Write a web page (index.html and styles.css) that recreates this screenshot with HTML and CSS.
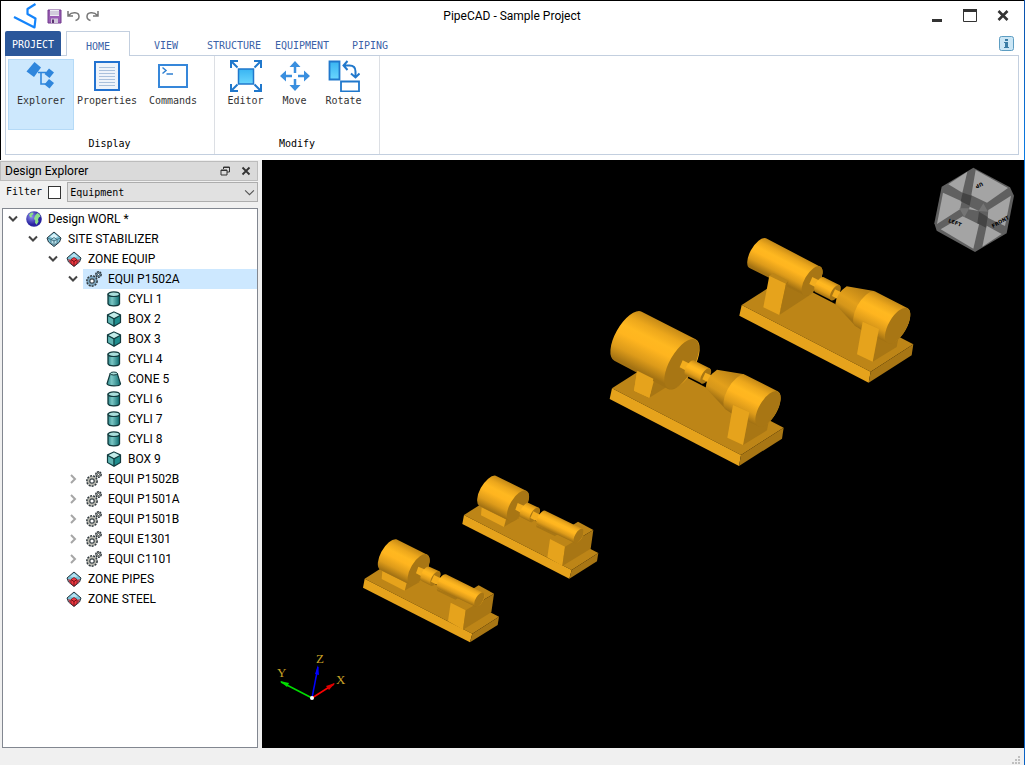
FILE: index.html
```html
<!DOCTYPE html>
<html lang="en">
<head>
<meta charset="utf-8">
<title>PipeCAD - Sample Project</title>
<link rel="stylesheet" href="styles.css">
</head>
<body>
<svg class="defs" aria-hidden="true">
  <defs>
    <linearGradient id="teal"><stop offset="0" stop-color="#2d8a8c"/><stop offset=".35" stop-color="#7cc6c4"/><stop offset="1" stop-color="#0f6f73"/></linearGradient>
    <linearGradient id="sky" x2="0" y2="1"><stop offset="0" stop-color="#39b4f2"/><stop offset="1" stop-color="#6ad6fd"/></linearGradient>
    <radialGradient id="globe" cx=".35" cy=".35"><stop offset="0" stop-color="#8f90f0"/><stop offset="1" stop-color="#2a24a0"/></radialGradient>
    <symbol id="i-world" viewBox="0 0 16 16"><circle cx="8" cy="8" r="7.800" fill="url(#globe)"/><path d="M3 3.500 5.500 1.500l2 .3-.5 1.700-1.500 1 .5 1.500-1.500.5-1-1.500zM9.500 4l2-2 2 1.200 1 2.500-1.500.5-1 2 .5 2.500-2 3-1.500-2 .2-2.500L8 8l.5-2z" fill="#8be08a"/></symbol>
    <symbol id="i-site" viewBox="0 0 16 16"><path d="M8 1l7 6-1.500 4L8 15.500 2.500 11 1 7z" fill="#7cc4da" stroke="#22333c"/><path d="M4 5.500 8 2.500l4 3L8 8z" fill="#d9f2f8"/><path d="M5 8.500 8 6.500l3 2v3L8 14.500l-3-3zM8 9.500V14M5 8.500l3 1.500 3-1.500M1.500 7 5 8.500M14.500 7 11 8.500" fill="#b9e2ec" stroke="#38606e" stroke-width=".8"/></symbol>
    <symbol id="i-zone" viewBox="0 0 16 16"><path d="M8 1l7 6-1.500 4L8 15.500 2.500 11 1 7z" fill="#7cc4da" stroke="#22333c"/><path d="M4 5.500 8 2.500l4 3L8 6z" fill="#b8e4f2"/><path d="M2 8l3 1v3.500l-2-1.500zM14 8l-3 1v3.500l2-1.500z" fill="#b9404c"/><path d="M5 8.500 8 6.500l3 2v4L8 15l-3-2.500z" fill="#ee3a42" stroke="#8d161d" stroke-width=".8"/><path d="M8 10v5M5 8.500 8 10.500l3-2" fill="none" stroke="#7b1016"/></symbol>
    <symbol id="i-gears" viewBox="0 0 16 16"><circle cx="6" cy="10" r="5" fill="var(--gear)" stroke="#333c42" stroke-width="1.800" stroke-dasharray="2 1"/><circle cx="6" cy="10" r="4.400" fill="var(--gear)"/><circle cx="6" cy="10" r="2.200" fill="#fff" stroke="#3e474d" stroke-width="1.200"/><circle cx="12.500" cy="3.500" r="2.700" fill="var(--gear)" stroke="#333c42" stroke-width="1.500" stroke-dasharray="2 .7"/><circle cx="12.500" cy="3.500" r="1" fill="#fff" stroke="#333c42" stroke-width=".8"/></symbol>
    <symbol id="i-cyl" viewBox="0 0 16 16"><path d="M3 3.500v9.500c1.500 2.300 8.500 2.300 10 0V3.500z" fill="#999" opacity=".4" transform="translate(1 1)"/><path d="M2 3.200v9.600c1 2.800 10.500 2.800 11.500 0V3.200z" fill="url(#teal)" stroke="#123a3d" stroke-width="1.300"/><ellipse cx="7.800" cy="3.200" rx="5.700" ry="2.300" fill="#a9dedb" stroke="#123a3d" stroke-width="1.200"/></symbol>
    <symbol id="i-box" viewBox="0 0 16 16"><path d="M8 1l6.500 3v7.500L8 15.200 1.500 11.500V4z" fill="#1f8d8d" stroke="#123a3d" stroke-width="1.200"/><path d="M8 1.500l6 2.900L8 7.500 2 4.400z" fill="#c3ebe8"/><path d="M2.200 5.200 7.500 8v6L2.200 11.200z" fill="#62b5b3"/><path d="M1.500 4.300 8 7.700l6.500-3.400M8 7.700V15" fill="none" stroke="#123a3d" stroke-width="1.200"/></symbol>
    <symbol id="i-cone" viewBox="0 0 16 16"><path d="M4.200 2.500 1 12.800c1 2.700 13 2.700 13.500 0L11.300 2.500z" fill="url(#teal)" stroke="#123a3d" stroke-width="1.200"/><ellipse cx="7.800" cy="2.500" rx="3.500" ry="1.500" fill="#a9dedb" stroke="#123a3d"/></symbol>
    <symbol id="i-down" viewBox="0 0 10 10"><path d="M1 2.500 5 6.500 9 2.500" fill="none" stroke="#444" stroke-width="2"/></symbol>
    <symbol id="i-right" viewBox="0 0 10 10"><path d="M3 1 7 5 3 9" fill="none" stroke="#a6a6a6" stroke-width="2"/></symbol>
  </defs>
</svg>

<div class="window">
  <header class="head">
    <div class="titlebar">
      <svg class="logo" viewBox="0 0 26 27" aria-hidden="true"><path d="M22.500 2 14.500 7v5L22.500 16.500 21.500 25.500 1 15" fill="none" stroke="#1484fb" stroke-width="2.200" stroke-linejoin="round"/></svg>
      <div class="quick">
        <button class="qbtn" aria-label="Save"><svg viewBox="0 0 15 15"><path d="M1 1h13v13H1z" fill="#9a5cb4" stroke="#713a8c"/><path d="M3 1h9v6H3z" fill="#ececf2"/><path d="M3 3h9M3 5h9" stroke="#b5a9c4"/><path d="M4 9.500h7V14H4z" fill="#cfc6da"/><path d="M5 10.500h2V14H5z" fill="#5c3473"/></svg></button>
        <button class="qbtn" aria-label="Undo"><svg viewBox="0 0 15 15"><path d="M2 2v5h5M2.500 6.500C6 2.500 13 3 13 7.500c0 2-1.300 3.500-3.500 4" fill="none" stroke="#777" stroke-width="1.500"/></svg></button>
        <button class="qbtn" aria-label="Redo"><svg viewBox="0 0 15 15"><path d="M13 2v5H8M12.500 6.500C9 2.500 2 3 2 7.500c0 2 1.300 3.500 3.500 4" fill="none" stroke="#777" stroke-width="1.500"/></svg></button>
      </div>
      <h1 class="title">PipeCAD - Sample Project</h1>
      <div class="winctl">
        <button class="wbtn" aria-label="Minimize"><svg viewBox="0 0 14 14"><path d="M2 11.500h10" stroke="#333" stroke-width="3"/></svg></button>
        <button class="wbtn" aria-label="Maximize"><svg viewBox="0 0 14 14"><path d="M.5.5h13v12H.5z" fill="none" stroke="#333"/><path d="M0 1.500h14" stroke="#333" stroke-width="3"/></svg></button>
        <button class="wbtn" aria-label="Close"><svg viewBox="0 0 14 14"><path d="M2.500 2l9 9M11.500 2l-9 9" stroke="#333" stroke-width="2.600"/></svg></button>
      </div>
    </div>
    <nav class="tabs">
      <button class="tab project">PROJECT</button>
      <button class="tab active">HOME</button>
      <button class="tab">VIEW</button>
      <button class="tab">STRUCTURE</button>
      <button class="tab">EQUIPMENT</button>
      <button class="tab">PIPING</button>
      <button class="info" aria-label="About"><svg viewBox="0 0 15 15"><rect x=".5" y=".5" width="14" height="14" rx="2" fill="#cbe6f5" stroke="#5d9dc2"/><path d="M6 3h3v2H6zM5 6h4v5h1v1H5v-1h1V7H5z" fill="#3a7ca5"/></svg></button>
    </nav>
    <div class="ribbon">
      <section class="group">
        <div class="tools">
          <button class="tool on"><svg viewBox="0 0 32 32"><g fill="#2f86dc"><path d="M9.500 2 16 7.500 9 17 1.500 11.500z"/><path d="M24 8.500l5 4-4.500 5.500-5-4zM24 19l5 4-4.500 5.500-5-4z"/></g><path d="M13 12.500h8M16 12.500V24h5" fill="none" stroke="#2f86dc" stroke-width="1.600"/></svg>Explorer</button>
          <button class="tool"><svg viewBox="0 0 32 32"><path d="M4 2h24v28H4z" fill="#eef3fa" stroke="#2272d0" stroke-width="2"/><path d="M8 7.500h16M8 10.500h16M8 13.500h16M8 16.500h16M8 19.500h16M8 22.500h16M8 25.500h16" stroke="#a9c0dc"/></svg>Properties</button>
          <button class="tool"><svg viewBox="0 0 32 32"><path d="M2 5h28v22H2z" fill="#fff" stroke="#3687da" stroke-width="2"/><path d="M5.500 7.500l3.500 3-3.500 3M9.500 14h6.500" fill="none" stroke="#2f80d2" stroke-width="1.500"/></svg>Commands</button>
        </div>
        <h2 class="gname">Display</h2>
      </section>
      <section class="group narrow">
        <div class="tools">
          <button class="tool"><svg viewBox="0 0 32 32"><path d="M8.500 9h15v15h-15z" fill="url(#sky)" stroke="#2078cc" stroke-width="1.500"/><path d="M1 8V1h7M1.500 1.500 7.500 7.500M24 1h7v7M30.500 1.500l-6 6M1 24v7h7M1.500 30.500l6-6M24 31h7v-7M30.500 30.500l-6-6" fill="none" stroke="#2078cc" stroke-width="2"/></svg>Editor</button>
          <button class="tool"><svg viewBox="0 0 32 32"><path d="M16 3v10M16 19v10M3 16h10M19 16h10" stroke="#3a8fdf" stroke-width="2.500"/><path d="M16 1l5.500 6h-11zM16 31l5.500-6h-11zM1 16l6-5.500v11zM31 16l-6-5.500v11z" fill="#3a8fdf"/></svg>Move</button>
          <button class="tool"><svg viewBox="0 0 32 32"><path d="M1.500 1.500h10v18h-10z" fill="url(#sky)" stroke="#2078cc" stroke-width="1.800"/><path d="M13 21.500h18v10H13z" fill="#fff" stroke="#2078cc" stroke-width="1.800"/><path d="M19.500 1 15.500 5.500l4 4.500M15.500 5.500h6c4 0 6 2.500 6 6V17M23 13.500l4.500 4 4-4" fill="none" stroke="#2078cc" stroke-width="2"/></svg>Rotate</button>
        </div>
        <h2 class="gname">Modify</h2>
      </section>
    </div>
  </header>

  <main class="work">
    <aside class="dock">
      <div class="dockhead">
        <h2 class="docktitle">Design Explorer</h2>
        <button class="dbtn" aria-label="Float"><svg viewBox="0 0 10 10"><path d="M3.500 3V1h6v5H7M1 4h6v5H1z" fill="none" stroke="#333"/><path d="M1 4.500h6M3 1.500h6" stroke="#333"/></svg></button>
        <button class="dbtn" aria-label="Close panel"><svg viewBox="0 0 10 10"><path d="M1.500 1.500l7 7M8.500 1.500l-7 7" stroke="#333" stroke-width="1.800"/></svg></button>
      </div>
      <div class="filter">
        <label for="filter-on">Filter</label>
        <input class="check" type="checkbox" id="filter-on">
        <div class="combo">
          <select aria-label="Filter type"><option>Equipment</option></select>
          <svg class="chev" viewBox="0 0 10 10" aria-hidden="true"><path d="M1 3l4 4 4-4" fill="none" stroke="#555"/></svg>
        </div>
      </div>
      <ul class="tree">
        <li><div class="row"><svg class="arrow"><use href="#i-down"/></svg><span class="node"><svg class="ico"><use href="#i-world"/></svg>Design WORL *</span></div>
          <ul>
            <li><div class="row"><svg class="arrow"><use href="#i-down"/></svg><span class="node"><svg class="ico"><use href="#i-site"/></svg>SITE STABILIZER</span></div>
              <ul>
                <li><div class="row"><svg class="arrow"><use href="#i-down"/></svg><span class="node"><svg class="ico"><use href="#i-zone"/></svg>ZONE EQUIP</span></div>
                  <ul>
                    <li><div class="row"><svg class="arrow"><use href="#i-down"/></svg><span class="node picked"><svg class="ico"><use href="#i-gears"/></svg>EQUI P1502A</span></div>
                      <ul>
                        <li><div class="row leaf"><span class="node"><svg class="ico"><use href="#i-cyl"/></svg>CYLI 1</span></div></li>
                        <li><div class="row leaf"><span class="node"><svg class="ico"><use href="#i-box"/></svg>BOX 2</span></div></li>
                        <li><div class="row leaf"><span class="node"><svg class="ico"><use href="#i-box"/></svg>BOX 3</span></div></li>
                        <li><div class="row leaf"><span class="node"><svg class="ico"><use href="#i-cyl"/></svg>CYLI 4</span></div></li>
                        <li><div class="row leaf"><span class="node"><svg class="ico"><use href="#i-cone"/></svg>CONE 5</span></div></li>
                        <li><div class="row leaf"><span class="node"><svg class="ico"><use href="#i-cyl"/></svg>CYLI 6</span></div></li>
                        <li><div class="row leaf"><span class="node"><svg class="ico"><use href="#i-cyl"/></svg>CYLI 7</span></div></li>
                        <li><div class="row leaf"><span class="node"><svg class="ico"><use href="#i-cyl"/></svg>CYLI 8</span></div></li>
                        <li><div class="row leaf"><span class="node"><svg class="ico"><use href="#i-box"/></svg>BOX 9</span></div></li>
                      </ul>
                    </li>
                    <li><div class="row"><svg class="arrow"><use href="#i-right"/></svg><span class="node"><svg class="ico"><use href="#i-gears"/></svg>EQUI P1502B</span></div></li>
                    <li><div class="row"><svg class="arrow"><use href="#i-right"/></svg><span class="node"><svg class="ico"><use href="#i-gears"/></svg>EQUI P1501A</span></div></li>
                    <li><div class="row"><svg class="arrow"><use href="#i-right"/></svg><span class="node"><svg class="ico"><use href="#i-gears"/></svg>EQUI P1501B</span></div></li>
                    <li><div class="row"><svg class="arrow"><use href="#i-right"/></svg><span class="node"><svg class="ico"><use href="#i-gears"/></svg>EQUI E1301</span></div></li>
                    <li><div class="row"><svg class="arrow"><use href="#i-right"/></svg><span class="node"><svg class="ico"><use href="#i-gears"/></svg>EQUI C1101</span></div></li>
                  </ul>
                </li>
                <li><div class="row leaf"><span class="node"><svg class="ico"><use href="#i-zone"/></svg>ZONE PIPES</span></div></li>
                <li><div class="row leaf"><span class="node"><svg class="ico"><use href="#i-zone"/></svg>ZONE STEEL</span></div></li>
              </ul>
            </li>
          </ul>
        </li>
      </ul>
    </aside>

    <section class="view" aria-label="3D view">
      <svg class="scene" viewBox="262 160 762 588">
        <defs>
          <linearGradient id="shade">
            <stop offset="0" stop-color="#c58a17"/><stop offset=".18" stop-color="#eca71c"/><stop offset=".36" stop-color="#ffb820"/><stop offset=".52" stop-color="#ffb51f"/><stop offset=".78" stop-color="#dd9b1a"/><stop offset="1" stop-color="#a37213"/>
          </linearGradient>
          <linearGradient id="g1" href="#shade" gradientUnits="userSpaceOnUse" x1="118" y1="38" x2="75" y2="123"/>
          <linearGradient id="g2" href="#shade" gradientUnits="userSpaceOnUse" x1="293" y1="155" x2="270" y2="201"/>
          <linearGradient id="g3" href="#shade" gradientUnits="userSpaceOnUse" x1="447" y1="198" x2="393" y2="304"/>
          <linearGradient id="g4" gradientUnits="userSpaceOnUse" x1="408" y1="190" x2="358" y2="270">
            <stop offset="0" stop-color="#bd8416"/><stop offset=".5" stop-color="#e3a01b"/><stop offset=".75" stop-color="#d5961a"/><stop offset="1" stop-color="#a27112"/>
          </linearGradient>
          <linearGradient id="g5" href="#shade" gradientUnits="userSpaceOnUse" x1="130" y1="31" x2="58" y2="176"/>
          <linearGradient id="g6" href="#shade" gradientUnits="userSpaceOnUse" x1="132" y1="220" x2="87" y2="310"/>
          <linearGradient id="g7" href="#shade" gradientUnits="userSpaceOnUse" x1="285" y1="327" x2="264" y2="372"/>
          <linearGradient id="g8" href="#shade" gradientUnits="userSpaceOnUse" x1="234" y1="303" x2="213" y2="347"/>
          <g id="base">
            <path d="M50 240 178 158 565 358 437 440z" fill="#bd8517"/>
            <path d="M50 240 437 440 431 473 43 272z" fill="#e6a31c"/>
            <path d="M437 440 565 358 560 391 431 473z" fill="#a87614"/>
          </g>
          <g id="drive">
            <path d="M262 156 286 168 276 189 253 177z" fill="#f3ad1e"/>
            <path d="M295 156 343 180A26 12-60 0 1 318 225L270 201A26 12-60 0 1 295 156z" fill="url(#g2)"/>
            <ellipse cx="331" cy="203" rx="26" ry="12" transform="rotate(-60 331 203)" fill="#a87614"/>
            <path d="M330 193 352 203 342 224 321 213z" fill="#f3ad1e"/>
            <path d="M462 300 443 410 515 366 522 330z" fill="#a87614"/>
            <path d="M365 184 447 198 425 315 391 303 331 238Q334 205 365 184z" fill="url(#g4)"/>
            <path d="M449 199 547 249A60 27-60 0 1 488 354L410 316 392 304A60 27-60 0 1 449 199z" fill="url(#g3)"/>
            <ellipse cx="518" cy="302" rx="60" ry="27" transform="rotate(-60 518 302)" fill="#a87614"/>
            <path d="M413 290 462 312 443 410 396 388z" fill="#e6a31c"/>
          </g>
          <g id="small">
            <path d="M44 341 124 290 447 455 367 506z" fill="#bd8517"/>
            <path d="M44 341 367 506 360 532 39 368z" fill="#e6a31c"/>
            <path d="M367 506 447 455 443 480 360 532z" fill="#a87614"/>
            <path d="M168 350 163 377 210 350z" fill="#a87614"/>
            <path d="M97 318 170 354 164 377 95 342z" fill="#e6a31c"/>
            <path d="M139 223 232 269A52 24-60 0 1 180 359L90 314A52 24-60 0 1 139 223z" fill="url(#g6)"/>
            <ellipse cx="206" cy="314" rx="52" ry="24" transform="rotate(-60 206 314)" fill="#a87614"/>
            <path d="M205 305 230 316 220 337 198 325z" fill="#f3ad1e"/>
            <path d="M238 305 268 319A24 11-60 0 1 243 362L215 348A24 11-60 0 1 238 305z" fill="url(#g8)"/>
            <ellipse cx="256" cy="340" rx="24" ry="11" transform="rotate(-60 256 340)" fill="#a87614"/>
            <path d="M252 330 278 343 268 363 243 350z" fill="#f3ad1e"/>
            <path d="M260 372 262 378 318 405 330 398z" fill="#a87614"/>
            <path d="M302 413 386 361 432 386 347 436z" fill="#bd8517"/>
            <path d="M302 413 347 436 339 494 294 468z" fill="#e6a31c"/>
            <path d="M347 436 432 386 424 442 339 494z" fill="#a87614"/>
            <path d="M288 328 400 383A24 11-60 0 1 376 425L265 372A24 11-60 0 1 288 328z" fill="url(#g7)"/>
            <ellipse cx="388" cy="404" rx="24" ry="11" transform="rotate(-60 388 404)" fill="#a87614"/>
          </g>
        </defs>

        <svg x="725" y="225" width="200" height="170" viewBox="0 0 600 510">
          <use href="#base"/>
          <path d="M187 170 163 270 265 203 235 180z" fill="#a87614"/>
          <path d="M123 40 286 125A49 22-60 0 1 237 211L75 130A49 22-60 0 1 123 40z" fill="url(#g1)"/>
          <ellipse cx="261" cy="168" rx="50" ry="22" transform="rotate(-60 261 168)" fill="#a87614"/>
          <path d="M133 152 145 144 190 167 183 176z" fill="#bd8517"/>
          <path d="M133 152 183 176 163 270 115 247z" fill="#e6a31c"/>
          <path d="M183 176 190 167 183 200 163 270z" fill="#a87614"/>
          <use href="#drive"/>
        </svg>

        <svg x="595" y="300" width="200" height="175" viewBox="0 0 600 525">
          <use href="#base" y="25" x="1"/>
          <path d="M175 236 163 293 235 248 200 230z" fill="#a87614"/>
          <path d="M127 205 180 230 163 293 117 272z" fill="#e6a31c"/>
          <path d="M140 35 302 118A84 37-60 0 1 219 267L58 182A84 37-60 0 1 140 35z" fill="url(#g5)"/>
          <ellipse cx="260" cy="192" rx="84" ry="36" transform="rotate(-60 260 192)" fill="#a87614"/>
          <path d="M127 212 175 236 163 293 117 272z" fill="#e6a31c"/>
          <use href="#drive" y="25" x="1"/>
        </svg>

        <svg x="350" y="465" width="260" height="190" viewBox="0 0 780 570">
          <use href="#small"/>
          <use href="#small" x="298" y="-191"/>
        </svg>

        <svg x="920" y="155" width="105" height="105" viewBox="0 0 315 315">
          <path d="M160 38 270 97 282 122 260 235 165 291 50 227 43 205 65 95z" fill="#606060"/>
          <g fill="#a4a4a4">
            <path d="M85 88 142 50 127 113z"/>
            <path d="M167 45 264 99 201 143 154 121z"/>
            <path d="M69 113 125 139 120 163 51 207z"/>
            <path d="M62 223 128 184 177 208 160 281z"/>
            <path d="M273 122 255 213 203 188 205 165z"/>
            <path d="M200 212 245 237 187 275z"/>
            <path d="M149 155 177 168 147 163z"/>
          </g>
          <path d="M128 113 155 122 149 152 122 139zM177 170 203 186 198 218 172 205z" fill="#444"/>
          <path d="M118 160 148 160 133 187zM190 145 204 170 176 168z" fill="#747474"/>
        </svg>
        <g class="cubetext">
          <text x="948" y="222" transform="rotate(20 948 222)">LEFT</text>
          <text x="993" y="228" transform="rotate(-30 993 228)">FRONT</text>
          <text x="982" y="182" transform="rotate(155 982 182)">UP</text>
        </g>

        <g stroke-width="1.500">
          <path d="M312 698 281 682" stroke="#0d0"/><path d="M280 681l9 2-2 4z" fill="#0d0"/>
          <path d="M312 698 318 667" stroke="#00f"/><path d="M318 665l1 10-4-1z" fill="#00f"/>
          <path d="M312 698 334 684" stroke="#f00"/><path d="M335 683l-6 7-3-4z" fill="#d00"/>
          <circle cx="312" cy="698" r="2" fill="#fff"/>
        </g>
        <g class="axes">
          <text x="277" y="677">Y</text><text x="316" y="663">Z</text><text x="336" y="684">X</text>
        </g>
      </svg>
    </section>
  </main>
  <footer class="status">
    <svg class="grip" viewBox="0 0 10 10" aria-hidden="true"><path d="M7 1h2v2H7zM4 4h2v2H4zM7 4h2v2H7zM1 7h2v2H1zM4 7h2v2H4zM7 7h2v2H7z" fill="#bfbfbf"/></svg>
  </footer>
</div>
</body>
</html>
```
FILE: styles.css
```css
* { box-sizing: border-box; }
body { margin: 0; font: 12px/20px Roboto, "Open Sans", sans-serif; color: #000; }
h1, h2 { margin: 0; font-size: 12px; font-weight: 400; }
ul { list-style: none; margin: 0; padding: 0; }
button { border: 0; padding: 0; background: none; color: inherit; font: inherit; }
svg { display: block; }
.defs { position: absolute; width: 0; height: 0; }

.window { display: flex; flex-direction: column; height: 100vh; padding-right: 1px; background: linear-gradient(#0a50aa, #0a84f0 25%, #0a62c4); }
.head { flex: none; background: #fff; border-top: 1px solid #000; border-left: 1px solid #000; padding: 0 5px 5px 4px; }

.titlebar { display: grid; grid-template-columns: 1fr auto 1fr; align-items: center; height: 30px; position: relative; }
.logo { position: absolute; left: 8px; top: 1px; width: 26px; height: 27px; }
.quick { display: flex; gap: 4px; padding-left: 42px; }
.qbtn svg { width: 15px; height: 15px; }
.title { text-align: center; }
.winctl { display: flex; gap: 19px; justify-content: flex-end; padding-right: 9px; }
.wbtn svg { width: 14px; height: 14px; }

.tabs, .ribbon, .filter, .combo select { font: 10px/14px "DejaVu Sans Mono", "Liberation Mono", monospace; }
.tabs { display: flex; height: 25px; gap: 4px; position: relative; }
.tab { width: 64px; height: 25px; padding-top: 5px; color: #3b62a8; }
.tab.project { width: 56px; padding-top: 2px; background: #2b579a; color: #fff; border-radius: 2px 2px 0 0; margin-right: 1px; }
.tab.active { background: #fff; border: 1px solid #c3cfdf; border-bottom: 0; z-index: 1; }
.info { margin-left: auto; padding-right: 5px; }
.info svg { width: 15px; height: 15px; }
.ribbon { display: flex; height: 100px; margin-top: -1px; border: 1px solid #c3cfdf; }
.group { display: flex; flex-direction: column; justify-content: space-between; padding: 3px 8px 3px 2px; border-right: 1px solid #dcdfe4; }
.group.narrow { padding: 3px 11px 3px 6px; }
.tools { display: flex; }
.tool { display: flex; flex-direction: column; align-items: center; gap: 2px; width: 66px; height: 71px; border: 1px solid transparent; color: #333; }
.narrow .tool { width: 49px; }
.tool svg { width: 32px; height: 32px; }
.tool.on { background: #cde8fd; border-color: #b5daf7; }
.gname { font-size: 10px; text-align: center; padding-left: 5px; }

.work { flex: 1; display: flex; min-height: 0; background: #f0f0f0; }
.dock { width: 262px; flex: none; display: flex; flex-direction: column; padding: 1px 4px 0 0; }
.dockhead { display: flex; align-items: center; gap: 11px; height: 20px; padding: 0 6px 0 4px; background: #dadada; border: 1px solid #bcbcbc; }
.docktitle { flex: 1; }
.dbtn svg { width: 10px; height: 10px; }
.filter { display: flex; align-items: center; gap: 6px; padding: 1px 0 6px 6px; }
.check { appearance: none; width: 13px; height: 13px; margin: 0; border: 1px solid #333; background: #fff; }
.combo { flex: 1; position: relative; }
.combo select { display: block; appearance: none; width: 100%; height: 20px; padding: 1px 2px 0; border: 1px solid #adadad; border-radius: 0; background: #e1e1e1; color: #000; }
.chev { position: absolute; right: 3px; top: 5px; width: 11px; height: 11px; }
.tree { flex: 1; margin-left: 2px; background: #fff; border: 1px solid #828790; min-height: 0; }
.tree ul { padding-left: 20px; }
.row { display: flex; align-items: center; height: 20px; }
.row.leaf { padding-left: 20px; }
.arrow { width: 10px; height: 10px; margin: 0 5px; }
.node { flex: 1; display: flex; align-items: center; gap: 6px; height: 20px; padding-left: 3px; --gear: #b9b9b0; }
.node.picked { background: #cde8ff; --gear: #7da6bf; }
.ico { width: 16px; height: 16px; flex: none; }

.view { flex: 1; min-width: 0; background: #000; overflow: hidden; }
.scene { width: 100%; height: 100%; }
.cubetext { font: 700 5px "DejaVu Sans", sans-serif; fill: #000; }
.axes { font: 13px "Liberation Serif", serif; fill: #c9a227; }
.status { flex: none; height: 17px; background: #f0f0f0; display: flex; justify-content: flex-end; align-items: flex-end; padding-right: 3px; }
.grip { width: 10px; height: 10px; }
```
